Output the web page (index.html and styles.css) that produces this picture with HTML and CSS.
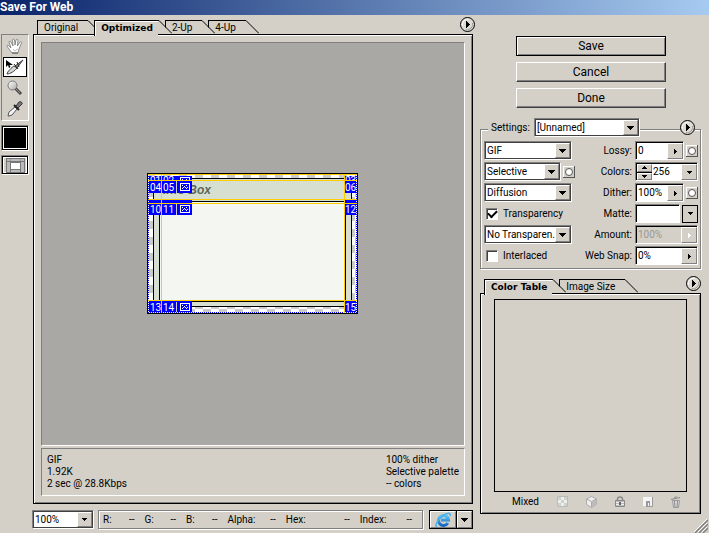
FILE: index.html
```html
<!DOCTYPE html>
<html lang="en">
<head>
<meta charset="utf-8">
<title>Save For Web</title>
<link rel="stylesheet" href="styles.css">
</head>
<body>
<svg class="defs" aria-hidden="true">
  <defs>
    <linearGradient id="metal" x1="0" y1="0" x2="1" y2="1"><stop offset="0" stop-color="#fff"/><stop offset="1" stop-color="#a8a8a6"/></linearGradient>
    <linearGradient id="ie" x1="0" y1="0" x2="0" y2="1"><stop offset="0" stop-color="#5cc4f4"/><stop offset="1" stop-color="#1668c4"/></linearGradient>
    <pattern id="checker" width="16" height="16" patternUnits="userSpaceOnUse"><path fill="#fff" d="M0 0h16v16H0z"/><path fill="#ccc" d="M0 0h8v8H0zM8 8h8v8H8z"/></pattern>
    <symbol id="down" viewBox="0 0 7 4"><path d="M0 0h7v1H6v1H5v1H4v1H3V3H2V2H1V1H0z"/></symbol>
    <symbol id="down-small" viewBox="0 0 5 3"><path d="M0 0h5v1H4v1H3v1H2V2H1V1H0z"/></symbol>
    <symbol id="right" viewBox="0 0 3 5"><path d="M0 0h1v1h1v1h1v1H2v1H1v1H0z"/></symbol>
    <symbol id="slope" viewBox="0 0 14 14"><path class="slope-fill" d="M0 0L14 14H0z"/><path class="slope-line" d="M0 .5h1L14 13.5"/></symbol>
    <symbol id="flyout" viewBox="0 0 15 15"><circle cx="7.5" cy="7.5" r="7" fill="#dedbd5" stroke="#000"/><path d="M2.5 9A5.5 5.5 0 0 1 9 2.3" fill="none" stroke="#fff"/><path d="M12.5 6A5.5 5.5 0 0 1 6 12.6" fill="none" stroke="#999"/><path d="M6 4h1v1h1v1h1v1h1v1H9v1H8v1H7v1H6z"/></symbol>
    <symbol id="channel" viewBox="0 0 12 12"><path fill="#fff" d="M0 0h12v12H0z"/><path fill="#555" d="M11 0h1v12H0v-1h11z"/><path fill="#d4d0c8" d="M1 1h10v10H1z"/><circle cx="6" cy="6" r="3.5" fill="#fff" stroke="#555"/></symbol>
    <symbol id="image-badge" viewBox="0 0 10 8"><path fill="#fff" d="M0 0h10v1H0zM0 7h10v1H0zM0 1h1v6H0zM9 1h1v6H9zM2 5h1v1H2zM3 4h1v1H3zM4 3h1v1H4zM5 4h1v1H5zM6 5h1v1H6zM7 4h1v1H7zM2 2h1v1H2zM6 2h1v1H6z"/></symbol>
  </defs>
</svg>
<header class="titlebar"><h1>Save For Web</h1></header>
<main class="dialog">
  <nav class="tools" aria-label="Tools">
    <div class="toolbox">
      <button class="tool" aria-label="Hand"><svg width="18" height="18" viewBox="0 0 18 18"><path d="M6 16C4 13 2 11 1 9c0-1 1-1 2 0l2 2L3 5c0-1 1.500-1 2 0l2 4-.5-6c0-1 1.500-1 2 0L9 8l1-5c.3-1 2-1 2 0l-.6 6L14 5c.8-.7 2 0 1.500 1L13 12l-1 4z" fill="#fff" stroke="#777" stroke-width=".8"/><path d="M6 16h6" stroke="#555"/><path d="M7 12l2 2 3-2" fill="none" stroke="#bbb"/></svg></button>
      <button class="tool tool-on" aria-label="Slice select"><svg width="20" height="17" viewBox="0 0 20 17"><path d="M2 15c0-2 5-7 7-8l3 2c-2 3-7 6-10 6z" fill="#d5d8d5" stroke="#444"/><path d="M10 7l8-6-6 8z" fill="#999" stroke="#444"/><path d="M9 5l4 5M12 3l2 5" stroke="#222"/><path d="M1 1v7l2-2 1 3 1.500-1-1-2H8z"/></svg></button>
      <button class="tool" aria-label="Zoom"><svg width="18" height="18" viewBox="0 0 18 18"><path d="M9 9l6 6" stroke="#444" stroke-width="3"/><path d="M9 9l5 5" stroke="#999"/><circle cx="6.500" cy="6.500" r="4.500" fill="url(#metal)" stroke="#777"/></svg></button>
      <button class="tool" aria-label="Eyedropper"><svg width="18" height="18" viewBox="0 0 18 18"><path d="M2 16l1-4 6-5 2 2-5 6-3 1z" fill="#f4f4f4" stroke="#555"/><path d="M8 5l5 5" stroke="#222" stroke-width="2"/><path d="M10 6l3-4c2-1 4 1 3 2l-4 4z" fill="#777" stroke="#333"/></svg></button>
    </div>
    <button class="swatch" aria-label="Eyedropper color"></button>
    <button class="slices" aria-label="Toggle slices visibility"><svg width="19" height="15" viewBox="0 0 19 15"><path fill="#777" d="M0 0h19v15H0z"/><path fill="#bbb" d="M1 1h17v2H1zM1 4h3v10H1zM15 4h3v10h-3zM5 12h9v2H5z"/><path fill="#999" d="M4 1h1v2H4zM14 1h1v2h-1z"/><path fill="#fff" d="M5 5h9v6H5z"/></svg></button>
  </nav>

  <section class="preview">
    <div class="tabrow">
      <button class="tab"><span>Original</span><svg><use href="#slope"/></svg></button>
      <button class="tab tab-on"><span>Optimized</span><svg><use href="#slope"/></svg></button>
      <button class="tab"><span>2-Up</span><svg><use href="#slope"/></svg></button>
      <button class="tab"><span>4-Up</span><svg><use href="#slope"/></svg></button>
      <button class="flyout flyout-out" aria-label="Preview menu"><svg><use href="#flyout"/></svg></button>
    </div>
    <div class="panel preview-panel">
      <div class="canvas">
        <svg class="art" width="211" height="141" viewBox="0 0 211 141">
          <path fill="url(#checker)" d="M0 0h211v141H0z"/>
          <path fill="#d7e0d0" d="M6 5h199v129H6z"/>
          <path fill="#f4f6f2" d="M13 29h185v99H13z"/>
          <text class="art-title" x="16" y="21">Info Box</text>
          <path d="M6 5h199v1H6zM6 5h1v129H6zM204 5h1v129h-1zM6 133h199v1H6zM12 28h187v1H12zM12 28h1v101h-1zM198 28h1v101h-1zM12 128h187v1H12z"/>
          <path fill="#00f" d="M2 3h43v17H2zM2 27h43v15H2zM2 128h43v12H2zM198 3h12v17h-12zM198 27h12v15h-12zM198 128h12v12h-12z"/>
          <svg x="0" y="2" width="211" height="5" viewBox="0 2 211 5"><text class="num" x="3" y="11">01</text><text class="num" x="16" y="11">02</text><text class="num" x="198" y="11">03</text><use href="#image-badge" x="33" y="4" width="10" height="8"/></svg>
          <g class="num">
            <text x="3" y="18">04</text><text x="16" y="18">05</text><text x="198" y="18">06</text>
            <text x="3" y="40">10</text><text x="16" y="40">11</text><text x="198" y="40">12</text>
            <text x="3" y="138">13</text><text x="16" y="138">14</text><text x="198" y="138">15</text>
          </g>
          <use href="#image-badge" x="33" y="10" width="10" height="8"/>
          <use href="#image-badge" x="33" y="32" width="10" height="8"/>
          <use href="#image-badge" x="33" y="130" width="10" height="8"/>
          <path fill="#ccc" d="M29 8h1v12h-1zM29 31h1v11h-1zM29 129h1v11h-1z"/>
          <path fill="none" stroke="#fff" d="M1.500 1v139M1 139.500h209M209.500 1v139"/>
          <path fill="none" stroke="#00f" stroke-dasharray="1 1" d="M1.500 1v139M1 139.500h209M209.500 1v139"/>
          <path fill="#fc0" d="M1 1h209v1H1zM1 7h209v1H1zM1 26h209v1H1zM1 30h209v1H1zM1 127h209v1H1zM14 1h1v139h-1zM197 1h1v139h-1z"/>
          <path fill="none" stroke="#000" d="M.5.5h210v140H.5z"/>
        </svg>
      </div>
      <div class="stats">
        <p>GIF<br>1.92K<br>2 sec @ 28.8Kbps</p>
        <p>100% dither<br>Selective palette<br>-- colors</p>
      </div>
    </div>
    <footer class="status">
      <span class="combo zoom"><select aria-label="Zoom level"><option>100%</option></select><i><svg class="down-small"><use href="#down-small"/></svg></i></span>
      <dl class="readout">
        <div><dt>R:</dt><dd>--</dd></div>
        <div><dt>G:</dt><dd>--</dd></div>
        <div><dt>B:</dt><dd>--</dd></div>
        <div><dt>Alpha:</dt><dd>--</dd></div>
        <div><dt>Hex:</dt><dd>--</dd></div>
        <div><dt>Index:</dt><dd>--</dd></div>
      </dl>
      <div class="browser">
        <button class="browser-go" aria-label="Preview in browser"><svg width="17" height="16" viewBox="0 0 17 16"><path d="M12.800 11A5 5 0 1 1 13.500 8H6" fill="none" stroke="url(#ie)" stroke-width="3"/><path d="M2 15c-3-2 2-9 7-12 4-2.500 7-2.500 6 1" fill="none" stroke="#48b0ec" stroke-width="1.500"/></svg></button>
        <button class="browser-menu" aria-label="Choose browser"><svg class="down"><use href="#down"/></svg></button>
      </div>
    </footer>
  </section>

  <aside class="side">
    <div class="actions">
      <button class="push push-default">Save</button>
      <button class="push">Cancel</button>
      <button class="push">Done</button>
    </div>

    <section class="settings">
      <div class="settings-head">
        <label for="preset">Settings:</label>
        <span class="combo preset"><select id="preset"><option>[Unnamed]</option></select><i><svg class="down"><use href="#down"/></svg></i></span>
        <button class="flyout" aria-label="Optimize menu"><svg><use href="#flyout"/></svg></button>
      </div>
      <div class="fields">
        <span class="combo"><select aria-label="Format"><option>GIF</option></select><i><svg class="down"><use href="#down"/></svg></i></span>
        <label for="lossy">Lossy:</label>
        <div class="cell"><span class="field"><input id="lossy" value="0"><button aria-label="Lossy slider"><svg class="right"><use href="#right"/></svg></button></span><button class="channel" aria-label="Lossy channel"><svg><use href="#channel"/></svg></button></div>

        <div class="cell cell-wide"><span class="combo"><select aria-label="Palette"><option>Selective</option></select><i><svg class="down"><use href="#down"/></svg></i></span><button class="channel" aria-label="Palette channel"><svg><use href="#channel"/></svg></button></div>
        <label for="colors">Colors:</label>
        <div class="cell"><span class="field"><span class="stepper"><button aria-label="More colors"><svg class="down-small up"><use href="#down-small"/></svg></button><button aria-label="Fewer colors"><svg class="down-small"><use href="#down-small"/></svg></button></span><input id="colors" value="256"><button aria-label="Color counts"><svg class="down-small"><use href="#down-small"/></svg></button></span></div>

        <span class="combo"><select aria-label="Dither method"><option>Diffusion</option></select><i><svg class="down"><use href="#down"/></svg></i></span>
        <label for="dither">Dither:</label>
        <div class="cell"><span class="field"><input id="dither" value="100%"><button aria-label="Dither slider"><svg class="right"><use href="#right"/></svg></button></span><button class="channel" aria-label="Dither channel"><svg><use href="#channel"/></svg></button></div>

        <label class="check"><input type="checkbox" checked>Transparency</label>
        <label for="matte">Matte:</label>
        <div class="cell"><span class="field"><input id="matte" value=""></span><button class="matte-menu" aria-label="Matte colors"><svg class="down-small"><use href="#down-small"/></svg></button></div>

        <span class="combo"><select aria-label="Transparency dither"><option>No Transparen.</option></select><i><svg class="down"><use href="#down"/></svg></i></span>
        <label for="amount">Amount:</label>
        <div class="cell"><span class="field field-off"><input id="amount" value="100%" disabled><button disabled aria-label="Amount slider"><svg class="right"><use href="#right"/></svg></button></span></div>

        <label class="check"><input type="checkbox">Interlaced</label>
        <label for="snap">Web Snap:</label>
        <div class="cell"><span class="field"><input id="snap" value="0%"><button aria-label="Web snap slider"><svg class="right"><use href="#right"/></svg></button></span></div>
      </div>
    </section>

    <section class="palette">
      <div class="tabrow">
        <button class="tab tab-on"><span>Color Table</span><svg><use href="#slope"/></svg></button>
        <button class="tab"><span>Image Size</span><svg><use href="#slope"/></svg></button>
        <button class="flyout" aria-label="Color table menu"><svg><use href="#flyout"/></svg></button>
      </div>
      <div class="panel palette-panel">
        <div class="colors"></div>
        <div class="palette-foot">
          <span>Mixed</span>
          <button aria-label="Map to transparent"><svg width="11" height="11" viewBox="0 0 11 11"><path fill="#eee" stroke="#bbb" d="M.5.5h10v10H.5z"/><path fill="#ccd2cc" d="M1 1h3v3H1zM7 1h3v3H7zM4 4h3v3H4zM1 7h3v3H1zM7 7h3v3H7z"/></svg></button>
          <button aria-label="Shift to web palette"><svg width="11" height="12" viewBox="0 0 11 12"><path fill="#eee" stroke="#aaa" d="M5.500.5l5 2.500v5.500l-5 3-5-3V3z"/><path fill="#bbb" d="M5.500 6l5-2.500v5l-5 3z"/><path stroke="#aaa" fill="none" d="M.5 3l5 2.500 5-2.500M5.500 6v5"/></svg></button>
          <button aria-label="Lock color"><svg width="10" height="11" viewBox="0 0 10 11"><path fill="none" stroke="#888" stroke-width="1.500" d="M2.500 5V3a2.500 2 0 0 1 5 0v2"/><path fill="#bbb" stroke="#888" d="M.5 4.500h9v6h-9z"/><path stroke="#eee" d="M1 6.500h8M1 8.500h8"/><path fill="#666" d="M4 6h2v3H4z"/></svg></button>
          <button aria-label="New color"><svg width="10" height="10" viewBox="0 0 10 10"><path fill="#f4f4f4" d="M0 0h9v9H0z"/><path stroke="#999" fill="none" d="M9.500 0v9.500H3"/><path fill="#999" d="M3 4h4v5H6V6H5v3H3z"/></svg></button>
          <button aria-label="Delete color"><svg width="10" height="12" viewBox="0 0 10 12"><path fill="#ddd" stroke="#999" d="M1.500 4.500h7l-1 7h-5z"/><path stroke="#888" fill="none" d="M3.500 5l.5 6M6.500 5L6 11M0 3.500l9-2M3 2l3-1.500"/></svg></button>
        </div>
      </div>
    </section>
  </aside>
</main>
<svg class="grip" viewBox="0 0 14 14" aria-hidden="true"><path stroke="#fff" d="M0 13L13 0M4 13l9-9M8 13l5-5"/><path stroke="#808080" stroke-width="1.500" d="M1 14L14 1M5 14l9-9M9 14l5-5"/></svg>
</body>
</html>
```
FILE: styles.css
```css
* { box-sizing: border-box; }

:root {
  --face: #d4d0c8;
  --shade: #808080;
  --dark: #404040;
}

body {
  margin: 0;
  min-height: 100vh;
  display: flex;
  flex-direction: column;
  background: var(--face);
  color: #000;
  font: 10px/12px Roboto, sans-serif;
}

button, input, select {
  font: inherit;
  color: inherit;
  margin: 0;
  padding: 0;
  border: 0;
  border-radius: 0;
  background: none;
  appearance: none;
  outline: 0;
  min-width: 0;
}

button { display: grid; place-items: center; }
svg { display: block; }
p, dl, dd { margin: 0; }

.defs { position: absolute; width: 0; height: 0; }

.titlebar {
  height: 15px;
  background: linear-gradient(90deg, #0a246a, #a6caf0);
  color: #fff;
}
.titlebar h1 { margin: 0; font: bold 12px/14px Roboto, sans-serif; }

.dialog {
  flex: 1;
  display: grid;
  grid-template-columns: 33px 1fr 221px;
  padding-right: 8px;
}

/* Tools */
.tools {
  display: flex;
  flex-direction: column;
  align-items: flex-start;
  gap: 4px;
  padding: 19px 0 0 1px;
}
.toolbox {
  width: 28px;
  display: grid;
  gap: 1px;
  padding: 1px;
  border: 1px solid;
  border-color: var(--shade) #fff #fff var(--shade);
}
.tool { height: 20px; justify-self: stretch; }
.tool-on { background: #fff; border: 1px solid #000; }
.swatch {
  width: 28px;
  height: 26px;
  background: #000;
  border: 1px solid;
  border-color: var(--shade) #fff #fff var(--shade);
  box-shadow: inset 0 0 0 1px #000, inset 0 0 0 2px #fff;
}
.slices {
  width: 28px;
  height: 20px;
  border: 1px solid;
  border-color: var(--shade) #fff #fff var(--shade);
  box-shadow: inset 0 0 0 1px #000, inset 0 0 0 2px #fff;
}

/* Tabs */
.tabrow {
  display: flex;
  align-items: flex-end;
  height: 19px;
  padding-left: 4px;
}
.tab {
  position: relative;
  display: flex;
  align-items: flex-start;
  height: 14px;
  margin-right: -7px;
}
.tab span {
  height: 14px;
  padding: 0 9px 0 6px;
  border: 1px solid #000;
  border-width: 1px 0 0 1px;
  background: var(--face);
  line-height: 14px;
  white-space: nowrap;
}
.tab svg { width: 14px; height: 14px; }
.tab:nth-child(1) { z-index: 4; }
.tab:nth-child(2) { z-index: 3; }
.tab:nth-child(3) { z-index: 2; }
.tab.tab-on { z-index: 5; height: 16px; margin-bottom: -2px; }
.tab-on span {
  height: 16px;
  padding-right: 5px;
  font: bold 9px/14px "DejaVu Sans", sans-serif;
  box-shadow: inset 1px 1px #fff;
}
.slope-fill { fill: #d4d0c8; }
.slope-line { fill: none; stroke: #000; }

.flyout { width: 15px; height: 15px; background: var(--face); }
.flyout svg { width: 15px; height: 15px; }
.tabrow .flyout { margin: 0 0 2px auto; }
.tabrow .flyout-out { margin-right: -2px; }

.panel {
  display: flex;
  flex-direction: column;
  border: 1px solid #000;
  box-shadow: inset 1px 1px #fff, inset -1px -1px var(--shade);
}

/* Preview */
.preview { display: flex; flex-direction: column; margin-right: 7px; }
.preview-panel { flex: 1; gap: 2px; padding: 7px; }
.canvas {
  flex: 1;
  display: grid;
  place-items: center;
  padding: 0 1px 1px 0;
  background: #a9a8a4;
  border: 1px solid;
  border-color: var(--shade) #fff #fff var(--shade);
}
.art { shape-rendering: crispEdges; }
.art-title { font: italic bold 12px "Liberation Sans", sans-serif; fill: #5d6759; }
.num { font: 10px Roboto, sans-serif; fill: #fff; }
.stats {
  display: flex;
  justify-content: space-between;
  height: 48px;
  padding: 5px;
  border: 1px solid;
  border-color: var(--shade) #fff #fff var(--shade);
}

.status {
  display: flex;
  align-items: stretch;
  height: 19px;
  margin: 6px 0 4px;
}
.zoom { width: 62px; margin: 0 4px 0 -1px; }
.readout {
  flex: 1;
  display: grid;
  grid-template-columns: 32fr 32fr 32fr 49fr 65fr 53fr;
  gap: 10px;
  align-items: center;
  padding: 0 10px 0 4px;
  border: 1px solid var(--shade);
  box-shadow: inset 1px 1px #fff, 1px 1px #fff;
}
.readout div { display: flex; justify-content: space-between; }
.browser {
  display: flex;
  margin-left: 6px;
  border: 1px solid #000;
}
.browser button {
  border: 1px solid;
  border-color: #fff var(--shade) var(--shade) #fff;
}
.browser .browser-go { width: 26px; }
.browser .browser-menu { width: 15px; box-shadow: -1px 0 #000; margin-left: 1px; }

/* Drop-downs and fields */
.combo {
  display: grid;
  grid-template-columns: 1fr 15px;
  height: 19px;
  background: #fff;
  border: 1px solid;
  border-color: var(--shade) #fff #fff var(--shade);
  outline: 1px solid var(--dark);
  outline-offset: -2px;
  padding: 1px;
}
.combo select { grid-area: 1 / 1 / 2 / 3; padding: 0 15px 0 1px; }
.combo i {
  grid-area: 1 / 2;
  display: grid;
  place-items: center;
  background: var(--face);
  border: 1px solid;
  border-color: #fff var(--shade) var(--shade) #fff;
  pointer-events: none;
}
.down { width: 7px; height: 4px; }
.down-small { width: 5px; height: 3px; }
.up { transform: rotate(180deg); }
.right { width: 3px; height: 5px; }

.cell { display: flex; align-items: center; gap: 2px; }
.cell-wide { margin-right: -3px; }
.cell .combo { flex: 1; }
.channel, .channel svg { width: 12px; height: 12px; }
.field {
  flex: 1;
  min-width: 0;
  display: flex;
  height: 19px;
  background: #fff;
  border: 1px solid;
  border-color: var(--shade) #fff #fff var(--shade);
  box-shadow: inset 1px 1px #000;
  padding: 1px 0 0 1px;
}
.field input { flex: 1; width: 0; padding-left: 1px; }
.field > button, .matte-menu {
  width: 16px;
  background: var(--face);
  border: 1px solid;
  border-color: #fff var(--shade) var(--shade) #fff;
}
.field-off { background: var(--face); color: #9a9791; }
.field-off svg { fill: #fff; }
.cell .matte-menu { height: 18px; outline: 1px solid #000; outline-offset: -1px; }
.stepper { display: grid; width: 15px; background: #000; gap: 1px; }
.stepper button { background: var(--face); border: 1px solid; border-color: #fff var(--shade) var(--shade) #fff; }

/* Side column */
.side { display: flex; flex-direction: column; }
.actions {
  display: grid;
  gap: 6px;
  padding: 21px 35px 21px 36px;
}
.push {
  height: 20px;
  border: 1px solid;
  border-color: #fff var(--dark) var(--dark) #fff;
  box-shadow: inset -1px -1px var(--shade);
  font-size: 12px;
}
.push-default {
  border-color: #000;
  box-shadow: inset 1px 1px #fff, inset -1px -1px var(--shade);
}

.settings {
  border: 1px solid var(--shade);
  box-shadow: inset 1px 1px #fff, 1px 1px #fff;
  padding: 0 2px 3px 3px;
}
.settings-head {
  display: flex;
  align-items: center;
  margin: -12px 3px 4px 4px;
}
.settings-head label { width: 46px; padding-left: 3px; background: var(--face); }
.preset { width: 106px; }
.settings-head .flyout { margin-left: auto; }

.fields {
  display: grid;
  grid-template-columns: 88px 1fr 63px;
  align-items: center;
  gap: 2px 3px;
}
.fields > label { text-align: right; white-space: nowrap; }
.fields > .check { display: flex; align-items: center; gap: 5px; padding-left: 2px; }
.check input {
  width: 12px;
  height: 12px;
  background: #fff;
  border: 1px solid;
  border-color: var(--shade) #fff #fff var(--shade);
  box-shadow: inset 1px 1px var(--dark);
  display: grid;
  place-items: center;
}
.check input:checked::before {
  content: "";
  width: 7px;
  height: 4px;
  border: solid #000;
  border-width: 0 0 2px 2px;
  transform: translateY(-1px) rotate(-45deg);
}

.palette {
  flex: 1;
  display: flex;
  flex-direction: column;
  margin: 5px 0 19px;
}
.palette-panel { flex: 1; padding: 5px 13px 2px; }
.colors { flex: 1; border: 1px solid #000; }
.palette-foot {
  display: flex;
  align-items: center;
  justify-content: space-between;
  height: 19px;
  padding: 0 6px 0 18px;
}

.grip { position: fixed; right: 1px; bottom: 0; width: 14px; height: 14px; }
```
